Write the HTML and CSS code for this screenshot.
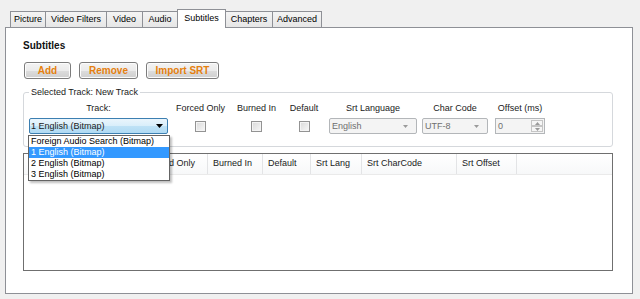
FILE: index.html
```html
<!DOCTYPE html>
<html lang="en">
<head>
<meta charset="UTF-8">
<meta name="viewport" content="width=device-width, initial-scale=1.0">
<title>Subtitles</title>
<link rel="stylesheet" href="styles.css">
</head>
<body>
  <div class="tabs">
    <div class="tab">Picture</div>
    <div class="tab">Video Filters</div>
    <div class="tab">Video</div>
    <div class="tab">Audio</div>
    <div class="tab active">Subtitles</div>
    <div class="tab">Chapters</div>
    <div class="tab">Advanced</div>
  </div>

  <div class="panel">
    <h2 class="title">Subtitles</h2>

    <div class="actions">
      <button class="btn btn-add">Add</button>
      <button class="btn btn-remove">Remove</button>
      <button class="btn btn-import">Import SRT</button>
    </div>

    <fieldset class="group">
      <legend>Selected Track: New Track</legend>
      <div class="fields">
        <div class="field f-track">
          <span class="field-label">Track:</span>
          <div class="control">
            <div class="combo combo-focus">
              <span class="combo-text">1 English (Bitmap)</span>
              <svg class="arrow" width="7" height="4" viewBox="0 0 7 4"><path d="M0 0h7L3.5 4z" fill="#000"/></svg>
              <!-- выпадающий список дорожек -->
              <ul class="popup">
                <li>Foreign Audio Search (Bitmap)</li>
                <li class="selected">1 English (Bitmap)</li>
                <li>2 English (Bitmap)</li>
                <li>3 English (Bitmap)</li>
              </ul>
            </div>
          </div>
        </div>

        <div class="field f-forced">
          <span class="field-label">Forced Only</span>
          <div class="control"><span class="check"></span></div>
        </div>

        <div class="field f-burned">
          <span class="field-label">Burned In</span>
          <div class="control"><span class="check"></span></div>
        </div>

        <div class="field f-default">
          <span class="field-label">Default</span>
          <div class="control"><span class="check"></span></div>
        </div>

        <div class="field f-lang">
          <span class="field-label">Srt Language</span>
          <div class="control">
            <div class="combo combo-off combo-lang">
              <span class="combo-text">English</span>
              <svg class="arrow" width="5" height="3" viewBox="0 0 5 3"><path d="M0 0h5L2.5 3z" fill="#9a9a9a"/></svg>
            </div>
          </div>
        </div>

        <div class="field f-code">
          <span class="field-label">Char Code</span>
          <div class="control">
            <div class="combo combo-off combo-code">
              <span class="combo-text">UTF-8</span>
              <svg class="arrow" width="5" height="3" viewBox="0 0 5 3"><path d="M0 0h5L2.5 3z" fill="#9a9a9a"/></svg>
            </div>
          </div>
        </div>

        <div class="field f-offset">
          <span class="field-label">Offset (ms)</span>
          <div class="control">
            <div class="spin">
              <span class="spin-text">0</span>
              <div class="spin-btns">
                <span class="spin-btn"><svg width="5" height="3" viewBox="0 0 5 3"><path d="M0 3h5L2.5 0z" fill="#9a9a9a"/></svg></span>
                <span class="spin-btn"><svg width="5" height="3" viewBox="0 0 5 3"><path d="M0 0h5L2.5 3z" fill="#9a9a9a"/></svg></span>
              </div>
            </div>
          </div>
        </div>
      </div>
    </fieldset>

    <div class="list">
      <div class="list-head">
        <!-- заголовок первой колонки закрыт выпадающим списком -->
        <div class="col c-track"></div>
        <div class="col c-forced">Forced Only</div>
        <div class="col c-burned">Burned In</div>
        <div class="col c-default">Default</div>
        <div class="col c-lang">Srt Lang</div>
        <div class="col c-code">Srt CharCode</div>
        <div class="col c-offset">Srt Offset</div>
        <div class="col c-fill"></div>
      </div>
    </div>
  </div>
</body>
</html>
```

FILE: styles.css
```css
body {
  margin: 0;
  background: #f0f0f0;
  font-family: "Liberation Sans", Arial, sans-serif;
  font-size: 9px;
  color: #1a1a1a;
}

/* вкладки */
.tabs {
  display: flex;
  align-items: flex-end;
  padding: 9px 0 0 10px;
}

.tab {
  box-sizing: border-box;
  height: 16px;
  line-height: 15px;
  margin-right: -1px;
  text-align: center;
  border: 1px solid #8e9096;
  border-bottom: none;
  background: linear-gradient(#f4f4f4, #e6e6e6);
  color: #000;
}

.tab:nth-child(1) { width: 36px; }
.tab:nth-child(2) { width: 62px; }
.tab:nth-child(3) { width: 37px; }
.tab:nth-child(4) { width: 36px; }
.tab:nth-child(5) { width: 49px; }
.tab:nth-child(6) { width: 48px; }
.tab:nth-child(7) { width: 50px; }

.tab.active {
  position: relative;
  z-index: 1;
  height: 19px;
  line-height: 17px;
  margin-bottom: -1px;
  background: #fff;
}

/* панель */
.panel {
  margin: 0 7px 0 5px;
  padding: 12px 19px 22px 17px;
  background: #fff;
  border: 1px solid #8e9096;
}

.title {
  margin: 0;
  font-size: 10px;
  line-height: 12px;
  font-weight: bold;
  color: #111;
}

.actions {
  display: flex;
  gap: 8px;
  margin: 10px 0 0 1px;
}

.btn {
  box-sizing: border-box;
  height: 17px;
  padding: 0;
  font-family: inherit;
  font-size: 10px;
  font-weight: bold;
  color: #e57f0e;
  border: 1px solid #7c7c7c;
  border-radius: 3px;
  background: linear-gradient(#f3f3f3 0%, #ebebeb 50%, #dddddd 50%, #cfcfcf 100%);
  box-shadow: inset 0 0 0 1px #fcfcfc;
}

.btn-add { width: 47px; }
.btn-remove { width: 59px; }
.btn-import { width: 73px; }

/* группа параметров дорожки */
.group {
  margin: 8px 0 0;
  padding: 4px 5px 12px;
  border: 1px solid #d5d8dc;
  border-radius: 3px;
}

.group legend {
  padding: 0 2px;
  line-height: 11px;
}

.fields {
  display: flex;
}

.field {
  display: flex;
  flex-direction: column;
  align-items: center;
}

.field-label {
  line-height: 12px;
  margin-bottom: 4px;
  white-space: nowrap;
}

.control {
  height: 16px;
  display: flex;
  align-items: center;
}

.f-track { width: 139px; }
.f-forced { width: 65px; }
.f-burned { width: 47px; }
.f-default { width: 48px; }
.f-lang { width: 90px; }
.f-code { width: 74px; }
.f-offset { width: 56px; }

.check {
  box-sizing: border-box;
  width: 11px;
  height: 11px;
  border: 1px solid #939393;
  background: linear-gradient(135deg, #d9d9d9, #f8f8f8);
  box-shadow: inset 0 0 0 1px #f4f4f4;
}

.combo {
  position: relative;
  box-sizing: border-box;
  height: 16px;
  display: flex;
  align-items: center;
  justify-content: space-between;
  border-radius: 2px;
}

.combo-focus {
  width: 139px;
  padding: 0 3px 0 1px;
  border: 1px solid #3c7fb1;
  background: linear-gradient(#eaf5fc 0%, #d9eefa 50%, #bfe2f6 50%, #b0daf3 100%);
}

.combo-focus .arrow {
  margin-right: 1px;
}

.combo-off {
  padding: 0 8px 0 2px;
  border: 1px solid #b3b6b9;
  background: #f4f4f4;
  color: #6f6f6f;
}

.combo-lang { width: 88px; }
.combo-code { width: 66px; }

.popup {
  position: absolute;
  z-index: 2;
  top: 16px;
  left: -2px;
  box-sizing: border-box;
  width: 142px;
  margin: 0;
  padding: 0;
  list-style: none;
  background: #fff;
  border: 1px solid #646464;
  box-shadow: 2px 2px 2px rgba(0, 0, 0, 0.25);
  color: #000;
}

.popup li {
  line-height: 11px;
  padding-left: 2px;
  white-space: nowrap;
}

.popup li.selected {
  background: #3399ff;
  color: #fff;
}

.spin {
  box-sizing: border-box;
  width: 50px;
  height: 16px;
  display: flex;
  align-items: center;
  justify-content: space-between;
  padding: 0 1px 0 2px;
  border: 1px solid #b3b6b9;
  background: #f4f4f4;
  color: #6f6f6f;
}

.spin-btns {
  display: flex;
  flex-direction: column;
}

.spin-btn {
  box-sizing: border-box;
  width: 12px;
  height: 6px;
  display: flex;
  align-items: center;
  justify-content: center;
  border: 1px solid #c5c5c5;
  background: #f6f6f6;
}

/* таблица субтитров */
.list {
  box-sizing: border-box;
  height: 118px;
  margin-top: 6px;
  border: 1px solid #6f6f6f;
  background: #fff;
}

.list-head {
  display: flex;
  height: 20px;
  border-bottom: 1px solid #eaeaea;
  background: linear-gradient(#ffffff, #f7f8f9);
}

.col {
  box-sizing: border-box;
  padding-left: 5px;
  line-height: 19px;
  border-right: 1px solid #e3e4e6;
  white-space: nowrap;
  color: #1a1a1a;
}

.c-track { width: 117px; }
.c-forced { width: 67px; }
.c-burned { width: 55px; }
.c-default { width: 48px; }
.c-lang { width: 51px; }
.c-code { width: 95px; }
.c-offset { width: 60px; }
.c-fill { flex: 1; border-right: none; }
```
